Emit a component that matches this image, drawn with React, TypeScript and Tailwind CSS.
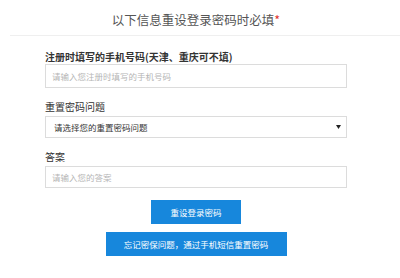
import React from "react";

export default function App() {
  return (
    <div className="w-[400px] h-[278px] bg-white overflow-hidden font-['Noto_Sans_CJK_SC','Noto_Sans',sans-serif]">
      <div className="ml-[10px] h-[36px] border-b border-[#efefef] flex items-center justify-center pt-[5px] pr-[18px]">
        <span className="text-[12.5px] leading-[16px] text-[#555]">
          以下信息重设登录密码时必填<span className="text-[#e0332f]">*</span>
        </span>
      </div>
      <div className="ml-[45px] w-[302px] flex flex-col">
        <div className="mt-[14px] h-[14px] leading-[14px] text-[10px] font-bold text-[#333]">
          注册时填写的手机号码(天津、重庆可不填)
        </div>
        <input
          className="h-[24px] w-full border border-[#dcdcdc] px-[6px] text-[8.5px] outline-none placeholder:text-[#b5b5b5]"
          placeholder="请输入您注册时填写的手机号码"
        />
        <div className="mt-[12px] mb-[2px] h-[14px] leading-[14px] text-[10px] text-[#333]">
          重置密码问题
        </div>
        <div className="h-[22px] w-full border border-[#dcdcdc] pl-[8px] pr-[4px] flex items-center justify-between">
          <span className="text-[8.5px] text-[#333]">请选择您的重置密码问题</span>
          <svg width="5" height="4" viewBox="0 0 5 4" className="mr-[1px]">
            <path d="M0 0 L5 0 L2.5 4 Z" fill="#222" />
          </svg>
        </div>
        <div className="mt-[12px] mb-[2px] h-[14px] leading-[14px] text-[10px] text-[#333]">
          答案
        </div>
        <input
          className="h-[22px] w-full border border-[#dcdcdc] px-[6px] text-[8.5px] outline-none placeholder:text-[#b5b5b5]"
          placeholder="请输入您的答案"
        />
        <div className="mt-[12px] flex justify-center">
          <button className="w-[90px] h-[24px] bg-[#1787dc] text-white text-[8.5px] flex items-center justify-center">
            重设登录密码
          </button>
        </div>
        <div className="mt-[8px] flex justify-center">
          <button className="w-[181px] h-[24px] bg-[#1787dc] text-white text-[8.5px] flex items-center justify-center">
            忘记密保问题，通过手机短信重置密码
          </button>
        </div>
      </div>
    </div>
  );
}
